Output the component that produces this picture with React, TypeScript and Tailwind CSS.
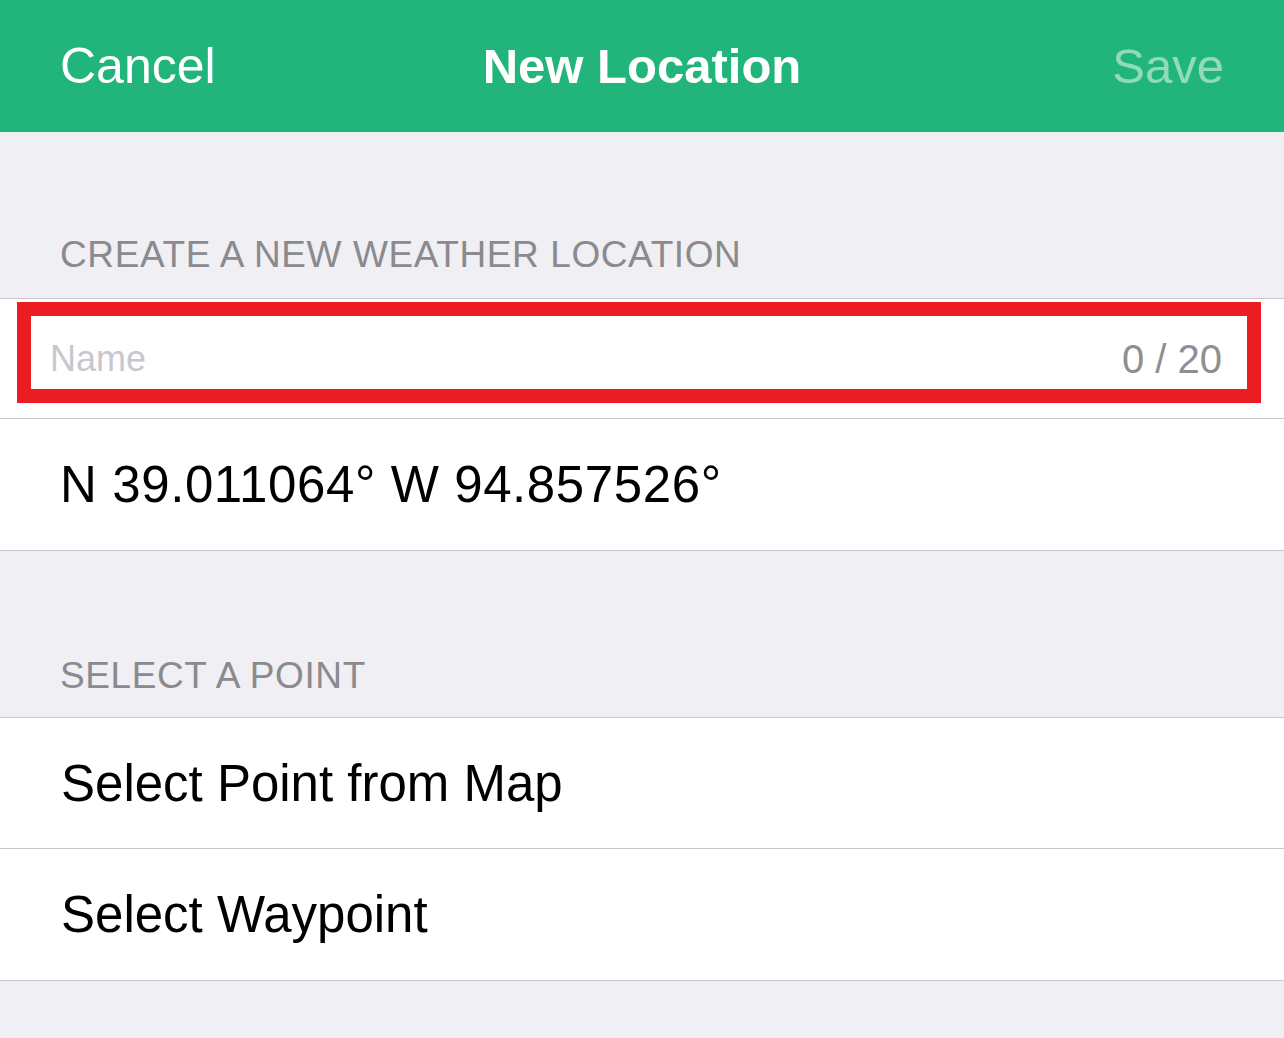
import React from "react";

const font = { fontFamily: '"Liberation Sans", Arial, sans-serif' };

export default function App() {
  return (
    <div
      className="w-[1284px] min-h-[1038px] bg-[#efeff4] font-['Liberation_Sans',Arial,sans-serif]"
      style={font}
    >
      {/* Nav bar */}
      <div className="h-[132px] bg-[#22b57b] grid grid-cols-3 items-center px-[60px]">
        <div className="text-white text-[50px] leading-none justify-self-start">Cancel</div>
        <div className="text-white text-[49px] font-bold leading-none justify-self-center whitespace-nowrap">
          New Location
        </div>
        <div className="text-white/50 text-[49px] leading-none justify-self-end">Save</div>
      </div>

      {/* Section 1 header */}
      <div className="h-[166px] flex items-end pl-[60px] pb-[25px]">
        <div className="text-[37px] leading-none tracking-[0.6px] text-[#8a8a8f] uppercase">
          Create a new weather location
        </div>
      </div>

      {/* Group 1 */}
      <div className="bg-white border-y border-[#c8c7cc]">
        <div className="relative h-[120px] border-b border-[#c8c7cc] flex items-center justify-between pl-[50px] pr-[62px]">
          <div className="text-[36px] leading-none text-[#c7c7cd]">Name</div>
          <div className="text-[40px] leading-none text-[#8e8e93]">0 / 20</div>
          <div className="absolute left-[17px] top-[3px] w-[1244px] h-[101px] border-[14px] border-[#ec1c24] pointer-events-none" />
        </div>
        <div className="h-[131px] flex items-center pl-[60px]">
          <div className="text-[51px] leading-none tracking-[0.6px] text-black">N 39.011064° W 94.857526°</div>
        </div>
      </div>

      {/* Section 2 header */}
      <div className="h-[166px] flex items-end pl-[60px] pb-[23px]">
        <div className="text-[37px] leading-none tracking-[0.6px] text-[#8a8a8f] uppercase">Select a point</div>
      </div>

      {/* Group 2 */}
      <div className="bg-white border-y border-[#c8c7cc]">
        <div className="h-[131px] border-b border-[#c8c7cc] flex items-center pl-[61px]">
          <div className="text-[51px] leading-none text-black">Select Point from Map</div>
        </div>
        <div className="h-[131px] flex items-center pl-[61px]">
          <div className="text-[51px] leading-none text-black">Select Waypoint</div>
        </div>
      </div>
    </div>
  );
}
